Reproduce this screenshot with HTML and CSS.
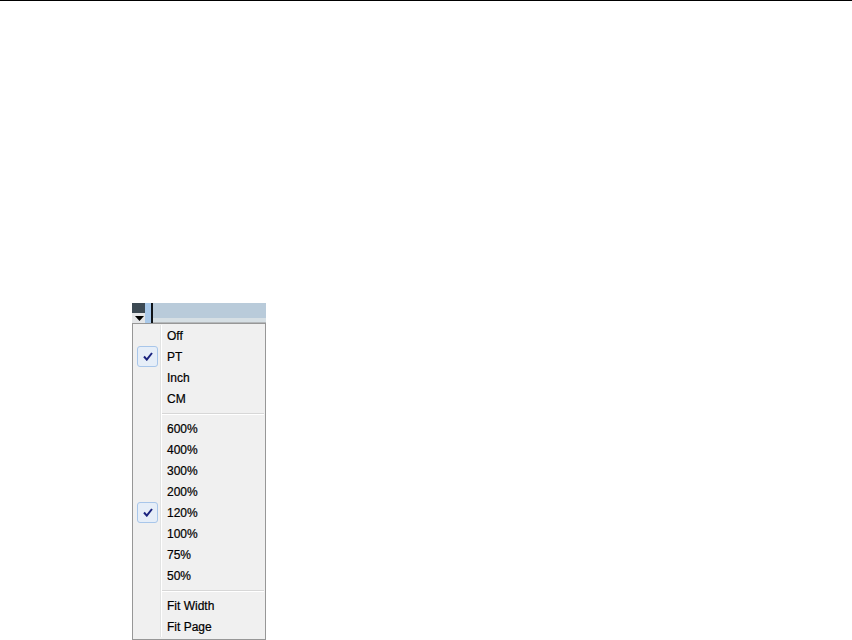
FILE: index.html
```html
<!DOCTYPE html>
<html>
<head>
<meta charset="utf-8">
<link rel="stylesheet" href="styles.css">
</head>
<body>
<div class="topline"></div>
<div class="area">
  <div class="strip">
    <div class="handle">
      <div class="handle-top"></div>
      <div class="handle-bottom">
        <svg width="9" height="5" viewBox="0 0 9 5"><path d="M0 0H9L4.5 5Z" fill="#000"/></svg>
      </div>
    </div>
    <div class="lightcol"></div>
    <div class="darkline"></div>
    <div class="bar">
      <div class="bar-main"></div>
      <div class="bar-band"></div>
    </div>
  </div>
  <div class="menu">
    <div class="group">
      <div class="item"><span class="gut"></span><span class="label">Off</span></div>
      <div class="item"><span class="gut"><span class="check"><svg width="10" height="9" viewBox="0 0 10 9"><path d="M1 4.5L3.8 7.6L9 1" fill="none" stroke="#1a237e" stroke-width="2"/></svg></span></span><span class="label">PT</span></div>
      <div class="item"><span class="gut"></span><span class="label">Inch</span></div>
      <div class="item"><span class="gut"></span><span class="label">CM</span></div>
    </div>
    <div class="sep"><span class="gut"></span><span class="rule"></span></div>
    <div class="group">
      <div class="item"><span class="gut"></span><span class="label">600%</span></div>
      <div class="item"><span class="gut"></span><span class="label">400%</span></div>
      <div class="item"><span class="gut"></span><span class="label">300%</span></div>
      <div class="item"><span class="gut"></span><span class="label">200%</span></div>
      <div class="item"><span class="gut"><span class="check"><svg width="10" height="9" viewBox="0 0 10 9"><path d="M1 4.5L3.8 7.6L9 1" fill="none" stroke="#1a237e" stroke-width="2"/></svg></span></span><span class="label">120%</span></div>
      <div class="item"><span class="gut"></span><span class="label">100%</span></div>
      <div class="item"><span class="gut"></span><span class="label">75%</span></div>
      <div class="item"><span class="gut"></span><span class="label">50%</span></div>
    </div>
    <div class="sep"><span class="gut"></span><span class="rule"></span></div>
    <div class="group">
      <div class="item"><span class="gut"></span><span class="label">Fit Width</span></div>
      <div class="item"><span class="gut"></span><span class="label">Fit Page</span></div>
    </div>
  </div>
</div>
</body>
</html>
```
FILE: styles.css
```css
html, body {
  margin: 0;
  padding: 0;
  background: #ffffff;
  height: 640px;
  overflow: hidden;
}
.topline {
  height: 1px;
  background: #000;
}
.area {
  padding-top: 302px;
  padding-left: 132px;
  width: 134px;
}
.strip {
  display: flex;
  height: 20px;
}
.handle {
  width: 13px;
  display: flex;
  flex-direction: column;
}
.handle-top {
  height: 10px;
  background: #3d4a54;
}
.handle-bottom {
  flex: 1;
  background: #e4e6e8;
  display: flex;
  justify-content: center;
  align-items: center;
  padding-left: 1px;
}
.handle-bottom svg { display: block; }
.lightcol {
  width: 6px;
  background: #a9c9ea;
}
.darkline {
  width: 2px;
  background: #101418;
}
.bar {
  flex: 1;
  display: flex;
  flex-direction: column;
}
.bar-main {
  height: 15px;
  background: #b9cbda;
}
.bar-band {
  flex: 1;
  background: #d6dfe4;
  border-bottom: 1px solid #b4b8bb;
}
.menu {
  width: 132px;
  border: 1px solid #979797;
  background: #f0f0f0;
  padding: 1px 0 2px 0;
  font-family: "Liberation Sans", Arial, sans-serif;
  font-size: 12px;
  color: #000;
}
.item {
  display: flex;
  height: 21px;
  align-items: stretch;
}
.gut {
  width: 28px;
  border-right: 1px solid #e2e3e3;
  box-shadow: 1px 0 0 #ffffff;
  display: flex;
  align-items: center;
  padding-left: 4px;
  box-sizing: border-box;
  flex: none;
}
.label {
  padding-left: 6px;
  display: flex;
  align-items: center;
  -webkit-text-stroke: 0.2px #000;
}
.check {
  width: 21px;
  height: 21px;
  box-sizing: border-box;
  border: 1px solid #a8c6ea;
  border-radius: 3px;
  background: #e6eef8;
  display: flex;
  justify-content: center;
  align-items: center;
}
.check svg { display: block; }
.sep {
  display: flex;
  height: 9px;
}
.sep .rule {
  flex: 1;
  margin-top: 4px;
  height: 1px;
  border-bottom: 1px solid #ffffff;
  background: #d7d7d7;
  margin-left: 1px;
  margin-right: 1px;
}
```
